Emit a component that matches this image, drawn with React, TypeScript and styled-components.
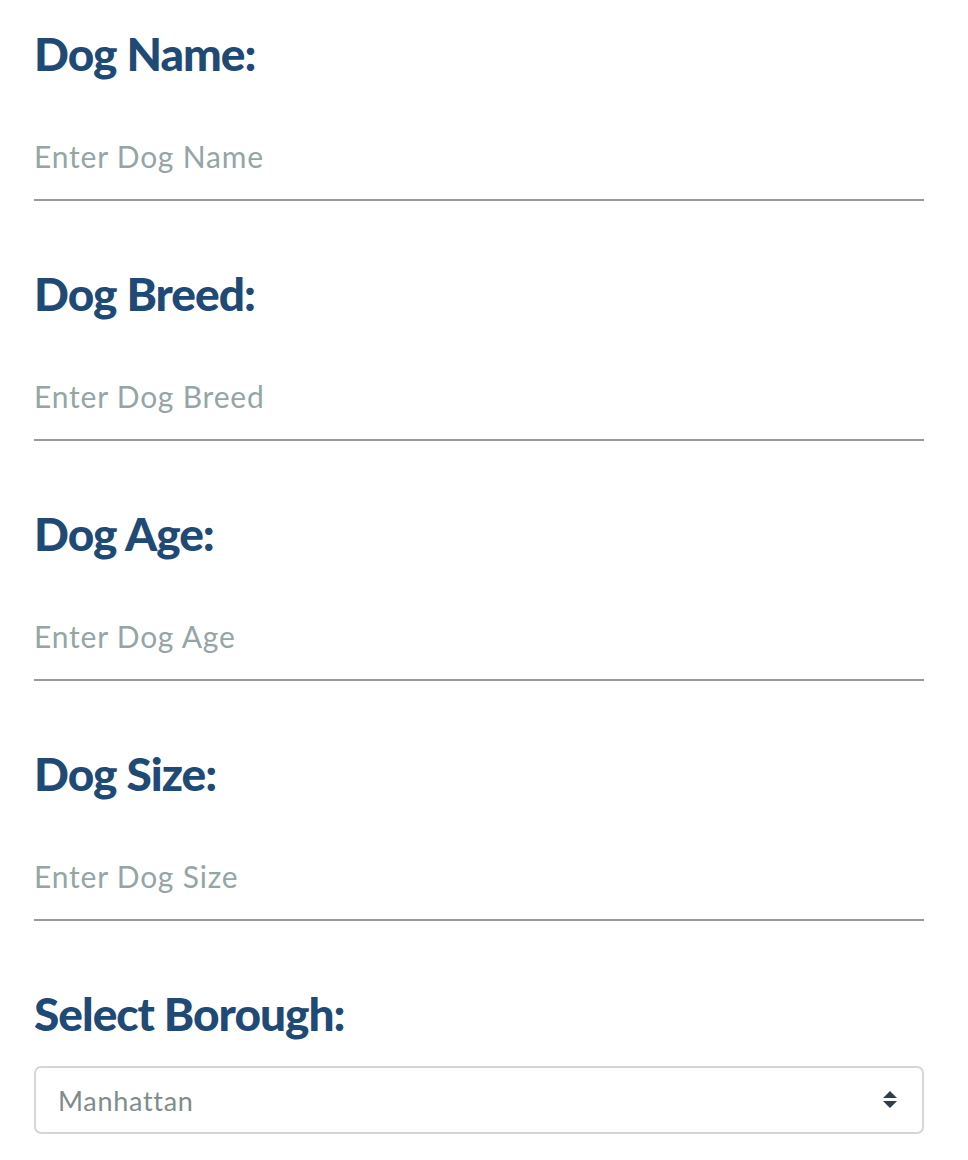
import React, {FC} from "react";
import styled, {createGlobalStyle} from "styled-components";

const headingColor = '#1f4a75'
const placeholderColor = '#95a5a6'

const GlobalStyle = createGlobalStyle`
  html, body {
    margin: 0;
    padding: 0;
    background: #fff;
  }
  body {
    font-family: Lato, "Open Sans", sans-serif;
  }
`
const Form = styled.form`
  display: flex;
  flex-direction: column;
  padding: 24px 44px 0 34px;
`
const Field = styled.div`
  display: flex;
  flex-direction: column;
  height: 240px;
  &:last-child {
    height: auto;
  }
`
const Label = styled.label<{$gap?: number}>`
  font-family: Lato, sans-serif;
  font-weight: 900;
  font-size: 46px;
  letter-spacing: -1px;
  line-height: 60px;
  color: ${headingColor};
  margin-bottom: ${p => p.$gap ?? 54}px;
`
const TextInput = styled.input`
  font-family: Lato, sans-serif;
  font-size: 30px;
  letter-spacing: 0.8px;
  color: #34495e;
  border: none;
  border-bottom: 2px solid #999;
  outline: none;
  padding: 0 0 25px 0;
  background: transparent;
  width: 100%;
  &::placeholder {
    color: ${placeholderColor};
  }
`
const SelectWrap = styled.div`
  position: relative;
`
const Select = styled.select`
  appearance: none;
  width: 100%;
  height: 68px;
  border: 2px solid #d3d6d8;
  border-radius: 7px;
  background: #fff;
  font-family: Lato, sans-serif;
  font-size: 27px;
  letter-spacing: 0.7px;
  color: #7f8c8d;
  padding: 0 22px;
  outline: none;
`
const Arrows = styled.svg`
  position: absolute;
  right: 26px;
  top: 24px;
  pointer-events: none;
`

interface FieldProps {
  label: string
  placeholder: string
}
const InputField: FC<FieldProps> = ({label, placeholder}) => (
  <Field>
    <Label>{label}</Label>
    <TextInput placeholder={placeholder} />
  </Field>
)

const fields: FieldProps[] = [
  {label: 'Dog Name:', placeholder: 'Enter Dog Name'},
  {label: 'Dog Breed:', placeholder: 'Enter Dog Breed'},
  {label: 'Dog Age:', placeholder: 'Enter Dog Age'},
  {label: 'Dog Size:', placeholder: 'Enter Dog Size'},
]

const App: FC = () => (
  <>
    <GlobalStyle />
    <Form>
      {fields.map(f => <InputField key={f.label} {...f} />)}
      <Field>
        <Label $gap={22}>Select Borough:</Label>
        <SelectWrap>
          <Select defaultValue="Manhattan">
            <option>Manhattan</option>
            <option>Brooklyn</option>
            <option>Queens</option>
            <option>Bronx</option>
            <option>Staten Island</option>
          </Select>
          <Arrows width="16" height="20" viewBox="0 0 16 20">
            <path d="M8 1 L15 8 H1 Z M1 11 H15 L8 18 Z" fill="#2c3e50" />
          </Arrows>
        </SelectWrap>
      </Field>
    </Form>
  </>
)

export default App
